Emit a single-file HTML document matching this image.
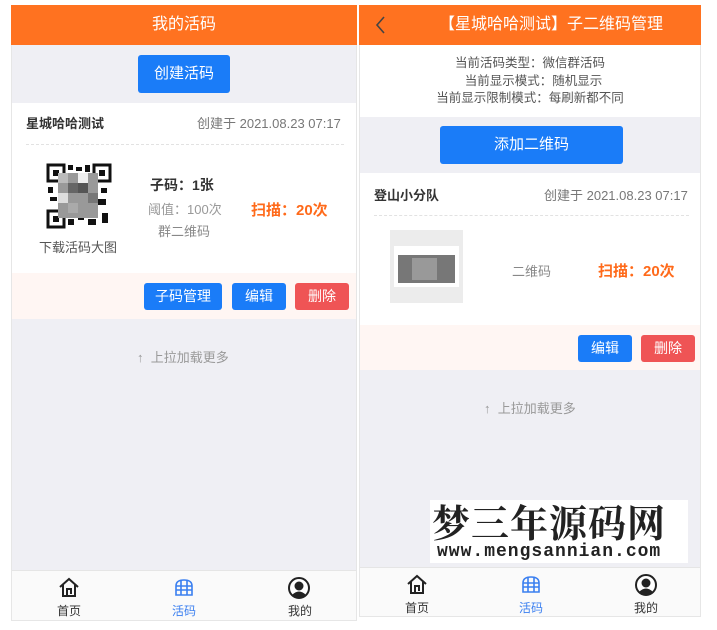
<!DOCTYPE html><html><head><meta charset="utf-8"><style>
*{margin:0;padding:0;box-sizing:border-box}
body{width:717px;height:630px;background:#fff;position:relative;overflow:hidden;font-family:"Liberation Sans","Noto Sans CJK SC",sans-serif;}
.a{position:absolute}
.hd{background:#ff7220;color:#fff;font-size:16px;text-align:center;line-height:40px}
.btn{color:#fff;text-align:center;border-radius:3px;font-size:14px}
.b{background:#1a7cf8}.r{background:#ef5455}
.g{color:#777}
.dash{border-top:1px dashed #e2e2e2}
</style></head><body>
<!-- left -->
<div class="a" style="left:11px;top:5px;width:346px;height:616px;background:#efeff4;border:1px solid #e6e6e6"></div>
<div class="a hd" style="left:11px;top:5px;width:346px;height:40px">我的活码</div>
<div class="a btn b" style="left:138px;top:55px;width:92px;height:38px;line-height:38px;font-size:15px">创建活码</div>
<div class="a" style="left:12px;top:103px;width:344px;height:170px;background:#fff"></div>
<div class="a" style="left:26px;top:113px;font-size:13px;font-weight:bold;color:#333">星城哈哈测试</div>
<div class="a g" style="left:197px;top:113px;font-size:13px">创建于 2021.08.23 07:17</div>
<div class="a dash" style="left:26px;top:144px;width:318px"></div>
<svg class="a" style="left:46px;top:163px" width="66" height="66" viewBox="0 0 66 66">
<rect width="66" height="66" fill="#fff"/>
<g fill="none" stroke="#111" stroke-width="3"><rect x="2" y="2" width="16" height="16"/><rect x="48" y="2" width="16" height="16"/><rect x="2" y="48" width="16" height="16"/></g>
<g fill="#111"><rect x="7" y="7" width="6" height="6"/><rect x="53" y="7" width="6" height="6"/><rect x="7" y="53" width="6" height="6"/>
<rect x="22" y="2" width="5" height="5"/><rect x="30" y="4" width="6" height="4"/><rect x="39" y="2" width="5" height="7"/><rect x="2" y="24" width="5" height="6"/><rect x="4" y="34" width="7" height="4"/><rect x="55" y="25" width="6" height="5"/><rect x="52" y="36" width="8" height="6"/><rect x="22" y="56" width="6" height="6"/><rect x="32" y="52" width="6" height="5"/><rect x="42" y="56" width="8" height="6"/><rect x="56" y="50" width="6" height="10"/></g>
<g><rect x="12" y="10" width="40" height="45" fill="#999"/><rect x="12" y="10" width="10" height="10" fill="#bbb"/><rect x="22" y="20" width="10" height="10" fill="#666"/><rect x="32" y="20" width="10" height="10" fill="#555"/><rect x="12" y="30" width="10" height="10" fill="#ddd"/><rect x="32" y="10" width="10" height="10" fill="#eee"/><rect x="42" y="30" width="10" height="10" fill="#777"/><rect x="22" y="40" width="10" height="10" fill="#aaa"/></g>
</svg>
<div class="a" style="left:39px;top:237px;font-size:13px;color:#555">下载活码大图</div>
<div class="a" style="left:150px;top:175px;font-size:14px;font-weight:bold;color:#333">子码：1张</div>
<div class="a" style="left:148px;top:199px;font-size:13px;color:#999">阈值：100次</div>
<div class="a" style="left:158px;top:221px;font-size:13px;color:#888">群二维码</div>
<div class="a" style="left:251px;top:199px;font-size:15px;font-weight:bold;color:#ff6a1a">扫描：20次</div>
<div class="a" style="left:12px;top:273px;width:344px;height:46px;background:#fff6f3"></div>
<div class="a btn b" style="left:144px;top:283px;width:78px;height:27px;line-height:27px">子码管理</div>
<div class="a btn b" style="left:232px;top:283px;width:54px;height:27px;line-height:27px">编辑</div>
<div class="a btn r" style="left:295px;top:283px;width:54px;height:27px;line-height:27px">删除</div>
<div class="a" style="left:137px;top:347px;font-size:13px;color:#999">↑&nbsp; 上拉加载更多</div>
<div class="a" style="left:12px;top:570px;width:344px;height:50px;background:#fafafa;border-top:1px solid #e5e5e5"></div>
<!-- right -->
<div class="a" style="left:359px;top:5px;width:342px;height:612px;background:#efeff4;border:1px solid #e6e6e6"></div>
<div class="a hd" style="left:359px;top:5px;width:342px;height:40px;font-size:16px;padding-left:42px">【星城哈哈测试】子二维码管理</div>
<svg class="a" style="left:374px;top:15px" width="12" height="20"><path d="M10 2 L3 10 L10 18" fill="none" stroke="#444" stroke-width="1.6"/></svg>
<div class="a" style="left:360px;top:45px;width:340px;height:72px;background:#fff;text-align:center;font-size:12.5px;color:#555;line-height:17.5px;padding-top:10px">当前活码类型：微信群活码<br>&nbsp;&nbsp;当前显示模式：随机显示<br>当前显示限制模式：每刷新都不同</div>
<div class="a btn b" style="left:440px;top:126px;width:183px;height:38px;line-height:38px;font-size:15px">添加二维码</div>
<div class="a" style="left:360px;top:173px;width:340px;height:152px;background:#fff"></div>
<div class="a" style="left:374px;top:185px;font-size:13px;font-weight:bold;color:#333">登山小分队</div>
<div class="a g" style="left:544px;top:185px;font-size:13px">创建于 2021.08.23 07:17</div>
<div class="a dash" style="left:374px;top:215px;width:315px"></div>
<div class="a" style="left:390px;top:230px;width:73px;height:73px;background:#ececec"></div>
<div class="a" style="left:394px;top:246px;width:65px;height:41px;background:#fff"></div>
<div class="a" style="left:398px;top:255px;width:57px;height:28px;background:#777"></div>
<div class="a" style="left:412px;top:258px;width:25px;height:22px;background:#999"></div>
<div class="a" style="left:512px;top:261px;font-size:13px;color:#888">二维码</div>
<div class="a" style="left:598px;top:260px;font-size:15px;font-weight:bold;color:#ff6a1a">扫描：20次</div>
<div class="a" style="left:360px;top:325px;width:340px;height:45px;background:#fff6f3"></div>
<div class="a btn b" style="left:578px;top:335px;width:54px;height:27px;line-height:27px">编辑</div>
<div class="a btn r" style="left:641px;top:335px;width:54px;height:27px;line-height:27px">删除</div>
<div class="a" style="left:484px;top:398px;font-size:13px;color:#999">↑&nbsp; 上拉加载更多</div>
<div class="a" style="left:430px;top:500px;width:258px;height:63px;background:#fff"></div>
<div class="a" style="left:432px;top:499px;font-size:38px;line-height:44px;color:#222;font-family:'Noto Serif CJK SC',serif;font-weight:bold;letter-spacing:1px">梦三年源码网</div>
<div class="a" style="left:437px;top:542px;font-size:18px;font-family:'Liberation Mono',monospace;color:#222;font-weight:bold;letter-spacing:1px">www.mengsannian.com</div>
<div class="a" style="left:360px;top:567px;width:340px;height:49px;background:#fafafa;border-top:1px solid #e5e5e5"></div>
<!-- nav icons -->
<svg width="0" height="0" style="position:absolute"><defs>
<g id="home"><path d="M2 10 L11 2 L20 10 M5 8 V19 H17 V8 M9 19 V12 H13 V17" fill="none" stroke="#222" stroke-width="2"/></g>
<g id="chest"><path d="M3 9 Q3 3 11 3 Q19 3 19 9 V18 H3 Z M3 9 H19 M8 3.5 V18 M14 3.5 V18 M3 13 H19" fill="none" stroke="#3a7ff0" stroke-width="1.6"/></g>
<g id="me"><circle cx="11" cy="11" r="10" fill="#fff" stroke="#222" stroke-width="2"/><circle cx="11" cy="9" r="4.5" fill="#222"/><path d="M4 18 Q11 11 18 18 Q11 23 4 18Z" fill="#222"/></g>
</defs></svg>
<svg class="a" style="left:58px;top:577px" width="22" height="22"><use href="#home"/></svg>
<svg class="a" style="left:173px;top:577px" width="22" height="22"><use href="#chest"/></svg>
<svg class="a" style="left:288px;top:577px" width="22" height="22"><use href="#me"/></svg>
<div class="a" style="left:57px;top:602px;font-size:12px;color:#333">首页</div>
<div class="a" style="left:172px;top:602px;font-size:12px;color:#3a7ff0">活码</div>
<div class="a" style="left:288px;top:602px;font-size:12px;color:#333">我的</div>
<svg class="a" style="left:406px;top:574px" width="22" height="22"><use href="#home"/></svg>
<svg class="a" style="left:520px;top:574px" width="22" height="22"><use href="#chest"/></svg>
<svg class="a" style="left:635px;top:574px" width="22" height="22"><use href="#me"/></svg>
<div class="a" style="left:405px;top:599px;font-size:12px;color:#333">首页</div>
<div class="a" style="left:519px;top:599px;font-size:12px;color:#3a7ff0">活码</div>
<div class="a" style="left:634px;top:599px;font-size:12px;color:#333">我的</div>
</body></html>
